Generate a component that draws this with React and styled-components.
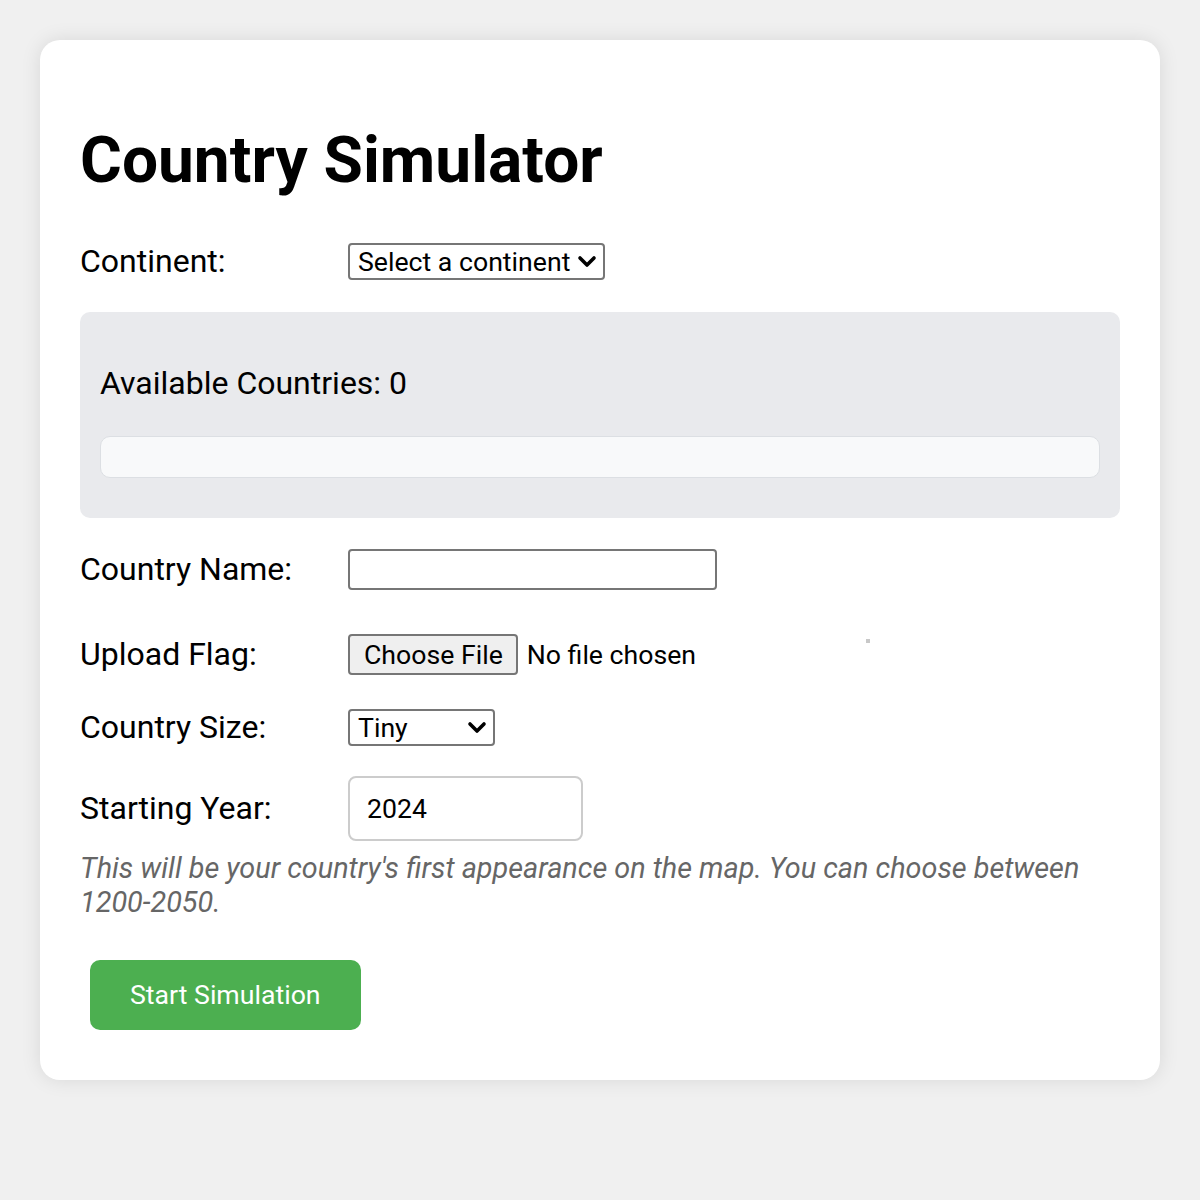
import React from "react";
import styled, { createGlobalStyle } from "styled-components";

const GlobalStyle = createGlobalStyle`
  body {
    margin: 0;
    background: #f0f0f0;
    font-family: Roboto, "Liberation Sans", sans-serif;
  }
`;

const Page = styled.div`
  padding: 40px;
`;

const Card = styled.div`
  background: #fff;
  border-radius: 20px;
  box-shadow: 0 0 20px rgba(0, 0, 0, 0.1);
  padding: 40px;
  display: flex;
  flex-direction: column;
  align-items: flex-start;
`;

const Title = styled.h1`
  font-size: 64px;
  font-weight: 700;
  line-height: 75px;
  margin: 43px 0 45px;
  color: #000;
`;

const Row = styled.div`
  display: flex;
  align-items: center;
  margin-top: ${(p) => p.$mt || 0}px;
  margin-bottom: ${(p) => p.$mb || 0}px;
`;

const Label = styled.label`
  width: 268px;
  font-size: 32px;
  line-height: 37px;
  color: #000;
  flex-shrink: 0;
`;

const SelectWrap = styled.div`
  position: relative;
  display: inline-block;
  svg {
    position: absolute;
    right: 8px;
    top: 50%;
    transform: translateY(-50%);
    pointer-events: none;
  }
`;

const Select = styled.select`
  appearance: none;
  display: block;
  width: ${(p) => p.$w}px;
  height: 37px;
  box-sizing: border-box;
  border: 2px solid #767676;
  border-radius: 4px;
  background: #fff;
  padding: 0 30px 0 8px;
  font-family: Roboto, "Liberation Sans", sans-serif;
  font-size: 26.67px;
  color: #000;
`;

const CountriesBox = styled.div`
  align-self: stretch;
  background: #e9eaed;
  border-radius: 10px;
  padding: 53px 20px 40px;
  margin-top: 32px;
`;

const CountriesTitle = styled.p`
  margin: 0 0 34px;
  font-size: 32px;
  line-height: 37px;
  color: #000;
`;

const CountryList = styled.div`
  height: 42px;
  box-sizing: border-box;
  background: #f8f9fa;
  border: 1px solid #dcdfe3;
  border-radius: 10px;
`;

const TextInput = styled.input`
  width: ${(p) => p.$w}px;
  height: ${(p) => p.$h}px;
  box-sizing: border-box;
  border: 2px solid ${(p) => (p.$light ? "#cccccc" : "#767676")};
  border-radius: ${(p) => (p.$light ? 8 : 4)}px;
  padding: 0 17px;
  font-family: Roboto, "Liberation Sans", sans-serif;
  font-size: 26.67px;
  color: #000;
  background: #fff;
  -moz-appearance: textfield;
  &::-webkit-outer-spin-button,
  &::-webkit-inner-spin-button {
    -webkit-appearance: none;
    margin: 0;
  }
`;

const FilePicker = styled.div`
  width: 508px;
  display: flex;
  align-items: center;
  gap: 9px;
  font-size: 26.67px;
  color: #000;
  input {
    display: none;
  }
`;

const FileButton = styled.button`
  height: 41px;
  box-sizing: border-box;
  padding: 0 13px 0 14px;
  background: #efefef;
  border: 2px solid #767676;
  border-radius: 4px;
  font-family: Roboto, "Liberation Sans", sans-serif;
  font-size: 26.67px;
  color: #000;
`;

const FlagPreview = styled.span`
  width: 4px;
  height: 4px;
  background: #c8c8c8;
  margin-left: 10px;
  align-self: flex-start;
  margin-top: 5px;
`;

const Hint = styled.p`
  margin: 10px 0 41px;
  font-size: 28.8px;
  line-height: 34px;
  font-style: italic;
  color: #666;
`;

const StartButton = styled.button`
  margin: 0 0 10px 10px;
  height: 70px;
  padding: 0 40px;
  background: #4caf50;
  color: #fff;
  border: none;
  border-radius: 10px;
  font-family: Roboto, "Liberation Sans", sans-serif;
  font-size: 26.67px;
  cursor: pointer;
`;

const Chevron = () => (
  <svg width="20" height="14" viewBox="0 0 20 14">
    <path d="M3 3 L10 10 L17 3" fill="none" stroke="#000" strokeWidth="3.6" strokeLinecap="round" strokeLinejoin="round" />
  </svg>
);

const App = () => {
  return (
    <Page>
      <GlobalStyle />
      <Card>
        <Title>Country Simulator</Title>

        <Row>
          <Label>Continent:</Label>
          <SelectWrap>
            <Select $w={257} defaultValue="">
              <option value="">Select a continent</option>
            </Select>
            <Chevron />
          </SelectWrap>
        </Row>

        <CountriesBox>
          <CountriesTitle>Available Countries: 0</CountriesTitle>
          <CountryList />
        </CountriesBox>

        <Row $mt={31} $mb={44}>
          <Label>Country Name:</Label>
          <TextInput type="text" $w={369} $h={41} />
        </Row>

        <Row $mb={34}>
          <Label>Upload Flag:</Label>
          <FilePicker>
            <FileButton type="button">Choose File</FileButton>
            <span>No file chosen</span>
            <input type="file" accept="image/*" />
          </FilePicker>
          <FlagPreview />
        </Row>

        <Row $mb={30}>
          <Label>Country Size:</Label>
          <SelectWrap>
            <Select $w={147} defaultValue="tiny">
              <option value="tiny">Tiny</option>
              <option value="small">Small</option>
              <option value="medium">Medium</option>
              <option value="large">Large</option>
            </Select>
            <Chevron />
          </SelectWrap>
        </Row>

        <Row>
          <Label>Starting Year:</Label>
          <TextInput type="number" defaultValue="2024" $w={235} $h={65} $light />
        </Row>

        <Hint>
          This will be your country's first appearance on the map. You can choose between 1200-2050.
        </Hint>

        <StartButton>Start Simulation</StartButton>
      </Card>
    </Page>
  );
};

export default App;
